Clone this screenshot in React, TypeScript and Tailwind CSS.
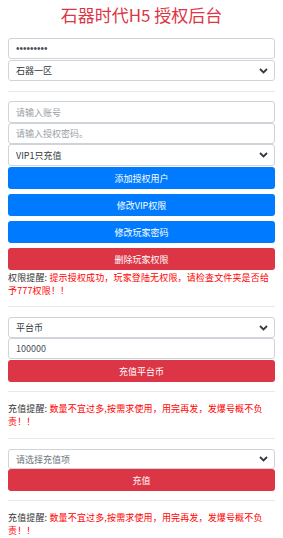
import { ReactNode } from 'react';

const font = { fontFamily: '"Noto Sans CJK SC", "Noto Sans", sans-serif' };

function Chevron() {
    return (
        <svg className="absolute right-[7px] top-1/2 -translate-y-1/2 pointer-events-none" width="9" height="6" viewBox="0 0 9 6">
            <path d="M1 1 L4.5 4.5 L8 1" fill="none" stroke="#343a40" strokeWidth="1.8" />
        </svg>
    );
}

function Select({ value, h, muted }: { value: string; h: string; muted?: boolean }) {
    return (
        <div className={`relative ${h}`}>
            <select
                className={`block w-full h-full py-0 appearance-none border border-[#ced4da] rounded-[3px] bg-white pl-[7px] text-[9px] leading-none ${muted ? 'text-[#6c757d]' : 'text-[#343a40]'} outline-none`}
                defaultValue={value}
            >
                <option>{value}</option>
            </select>
            <Chevron />
        </div>
    );
}

function Input({ h, placeholder, value, type }: { h: string; placeholder?: string; value?: string; type?: string }) {
    return (
        <input
            type={type || 'text'}
            className={`block w-full ${h} py-0 border border-[#ced4da] rounded-[3px] bg-white pl-[7px] text-[9px] leading-none text-[#495057] placeholder:text-[#9aa0a6] outline-none`}
            placeholder={placeholder}
            defaultValue={value}
        />
    );
}

function Btn({ children, red, mt }: { children: ReactNode; red?: boolean; mt: string }) {
    return (
        <button
            className={`block w-full h-[22px] ${mt} rounded-[3px] text-white text-[9px] leading-none ${red ? 'bg-[#dc3545]' : 'bg-[#007bff]'}`}
        >
            {children}
        </button>
    );
}

function Notice({ label, text, mt }: { label: string; text: string; mt: string }) {
    return (
        <p className={`${mt} text-[9px] leading-[13px] tracking-[0.15px] text-[#333]`}>
            {label}: <span className="text-[#ff0000]">{text}</span>
        </p>
    );
}

function Hr({ mt }: { mt: string }) {
    return <div className={`${mt} border-t border-[#e9e9e9]`}></div>;
}

export default function App() {
    return (
        <div className="min-h-screen bg-white px-2" style={font}>
            {/* Title */}
            <h1 className="h-[30px] leading-[30px] text-center text-[17px] text-[#dc3545]">石器时代H5 授权后台</h1>

            <div className="mt-[8px]">
                <input
                    type="password"
                    defaultValue="123456789"
                    className="block w-full h-[21px] py-0 border border-[#ced4da] rounded-[3px] bg-white pl-[7px] text-[10px] text-[#495057] outline-none"
                    style={{ fontFamily: '"Liberation Sans", sans-serif' }}
                />
            </div>
            <div className="mt-[1px]">
                <Select h="h-[21px]" value="石器一区" />
            </div>

            <Hr mt="mt-[10px]" />

            {/* Account */}
            <div className="mt-[9px]">
                <Input h="h-[22px]" placeholder="请输入账号" />
                <Input h="h-[21px]" placeholder="请输入授权密码。" />
                <Select h="h-[22px]" value="VIP1只充值" />
            </div>
            <Btn mt="mt-[1px]">添加授权用户</Btn>
            <Btn mt="mt-[5px]">修改VIP权限</Btn>
            <Btn mt="mt-[5px]">修改玩家密码</Btn>
            <Btn mt="mt-[5px]" red>删除玩家权限</Btn>
            <Notice mt="mt-[1px]" label="权限提醒" text="提示授权成功，玩家登陆无权限，请检查文件夹是否给予777权限！！" />

            <Hr mt="mt-[9px]" />

            {/* Platform coin */}
            <div className="mt-[10px]">
                <Select h="h-[21px]" value="平台币" />
                <Input h="h-[21px]" value="100000" />
            </div>
            <Btn mt="mt-[1px]" red>充值平台币</Btn>

            <Hr mt="mt-[9px]" />
            <Notice mt="mt-[10px]" label="充值提醒" text="数量不宜过多,按需求使用，用完再发，发爆号概不负责！！" />
            <Hr mt="mt-[10px]" />

            {/* Recharge */}
            <div className="mt-[10px]">
                <Select h="h-[20px]" value="请选择充值项" muted />
            </div>
            <Btn mt="mt-0" red>充值</Btn>

            <Hr mt="mt-[9px]" />
            <Notice mt="mt-[10px]" label="充值提醒" text="数量不宜过多,按需求使用，用完再发，发爆号概不负责！！" />
        </div>
    );
}
